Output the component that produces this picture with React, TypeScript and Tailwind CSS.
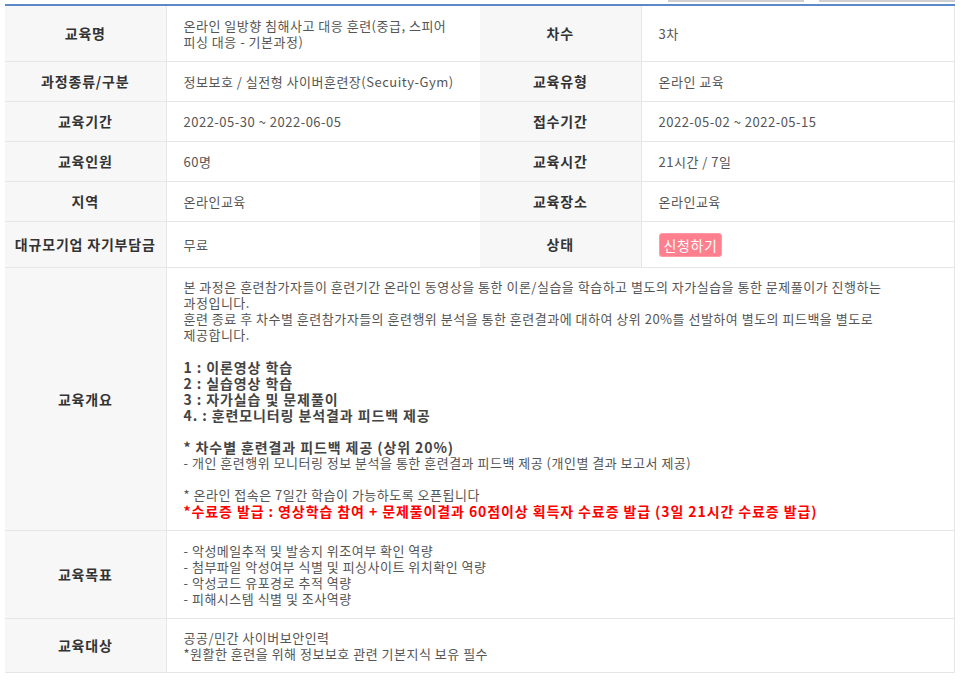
import React from 'react';

const FONT = '"Noto Sans CJK KR", "Noto Sans", sans-serif';

interface InfoRow {
  label: string;
  value: React.ReactNode;
  label2: string;
  value2: React.ReactNode;
  tall?: boolean;
}

const rows: InfoRow[] = [
  {
    label: '교육명',
    value: (
      <>
        온라인 일방향 침해사고 대응 훈련(중급, 스피어
        <br />
        피싱 대응 - 기본과정)
      </>
    ),
    label2: '차수',
    value2: '3차',
  },
  {
    label: '과정종류/구분',
    value: '정보보호 / 실전형 사이버훈련장(Secuity-Gym)',
    label2: '교육유형',
    value2: '온라인 교육',
  },
  {
    label: '교육기간',
    value: '2022-05-30 ~ 2022-06-05',
    label2: '접수기간',
    value2: '2022-05-02 ~ 2022-05-15',
  },
  { label: '교육인원', value: '60명', label2: '교육시간', value2: '21시간 / 7일' },
  { label: '지역', value: '온라인교육', label2: '교육장소', value2: '온라인교육' },
  {
    label: '대규모기업 자기부담금',
    value: '무료',
    label2: '상태',
    value2: (
      <span className="block h-[24px] w-fit rounded-[3px] border border-[#ff9aa6] bg-[#ff7f8e] px-[4px] text-[14px] leading-[22px] tracking-[0.6px] text-white">
        신청하기
      </span>
    ),
    tall: true,
  },
];

const labelCls =
  'border-b border-r border-[#e6e6e6] bg-[#f7f7f7] text-center align-middle text-[14px] font-bold text-[#333] tracking-[0.8px]';
const valueCls =
  'border-b border-[#e6e6e6] bg-white px-[17px] text-left align-middle text-[13px] leading-4 text-[#555] tracking-[0.5px]';
const boldLine = 'text-[14px] font-bold tracking-[0.9px]';

export default function App() {
  return (
    <div className="min-h-[683px] bg-white" style={{ fontFamily: FONT }}>
      <div className="ml-[5px] w-[950px]">
        {/* bottoms of the buttons above */}
        <div className="flex h-[4px] items-start justify-end gap-[15px]">
          <div className="h-[2px] w-[136px] bg-[#cfcfcf]" />
          <div className="h-[2px] w-[136px] bg-[#cfcfcf]" />
        </div>
        <div className="h-[2px] bg-[#5b89c8]" />

        <table className="w-full table-fixed border-collapse border-r border-[#e6e6e6]">
          <colgroup>
            <col className="w-[161px]" />
            <col className="w-[314px]" />
            <col className="w-[161px]" />
            <col />
          </colgroup>
          <tbody>
            {rows.map((r) => (
              <tr key={r.label}>
                <th className={labelCls}>{r.label}</th>
                <td className={valueCls + ' py-[11.5px]'}>{r.value}</td>
                <th className={labelCls}>{r.label2}</th>
                <td className={valueCls + (r.tall ? ' py-[10.5px]' : ' py-[11.5px]')}>{r.value2}</td>
              </tr>
            ))}

            <tr>
              <th className={labelCls}>교육개요</th>
              <td colSpan={3} className={valueCls + ' py-[11px]'}>
                <div className="whitespace-nowrap">
                  본 과정은 훈련참가자들이 훈련기간 온라인 동영상을 통한 이론/실습을 학습하고 별도의 자가실습을 통한 문제풀이가 진행하는
                  <br />
                  과정입니다.
                  <br />
                  훈련 종료 후 차수별 훈련참가자들의 훈련행위 분석을 통한 훈련결과에 대하여 상위 20%를 선발하여 별도의 피드백을 별도로
                  <br />
                  제공합니다.
                  <br />
                  <br />
                  <div className={boldLine + ' text-[#444]'}>
                    1 : 이론영상 학습
                    <br />
                    2 : 실습영상 학습
                    <br />
                    3 : 자가실습 및 문제풀이
                    <br />
                    4. : 훈련모니터링 분석결과 피드백 제공
                  </div>
                  <br />
                  <div className={boldLine + ' text-[#444]'}>* 차수별 훈련결과 피드백 제공 (상위 20%)</div>
                  - 개인 훈련행위 모니터링 정보 분석을 통한 훈련결과 피드백 제공 (개인별 결과 보고서 제공)
                  <br />
                  <br />
                  * 온라인 접속은 7일간 학습이 가능하도록 오픈됩니다
                  <div className={boldLine + ' text-[#ff0000]'}>
                    *수료증 발급 : 영상학습 참여 + 문제풀이결과 60점이상 획득자 수료증 발급 (3일 21시간 수료증 발급)
                  </div>
                </div>
              </td>
            </tr>

            <tr>
              <th className={labelCls}>교육목표</th>
              <td colSpan={3} className={valueCls + ' py-[11.5px]'}>
                - 악성메일추적 및 발송지 위조여부 확인 역량
                <br />
                - 첨부파일 악성여부 식별 및 피싱사이트 위치확인 역량
                <br />
                - 악성코드 유포경로 추적 역량
                <br />
                - 피해시스템 식별 및 조사역량
              </td>
            </tr>

            <tr>
              <th className={labelCls}>교육대상</th>
              <td colSpan={3} className={valueCls + ' py-[10.5px]'}>
                공공/민간 사이버보안인력
                <br />
                *원활한 훈련을 위해 정보보호 관련 기본지식 보유 필수
              </td>
            </tr>
          </tbody>
        </table>
      </div>
    </div>
  );
}
